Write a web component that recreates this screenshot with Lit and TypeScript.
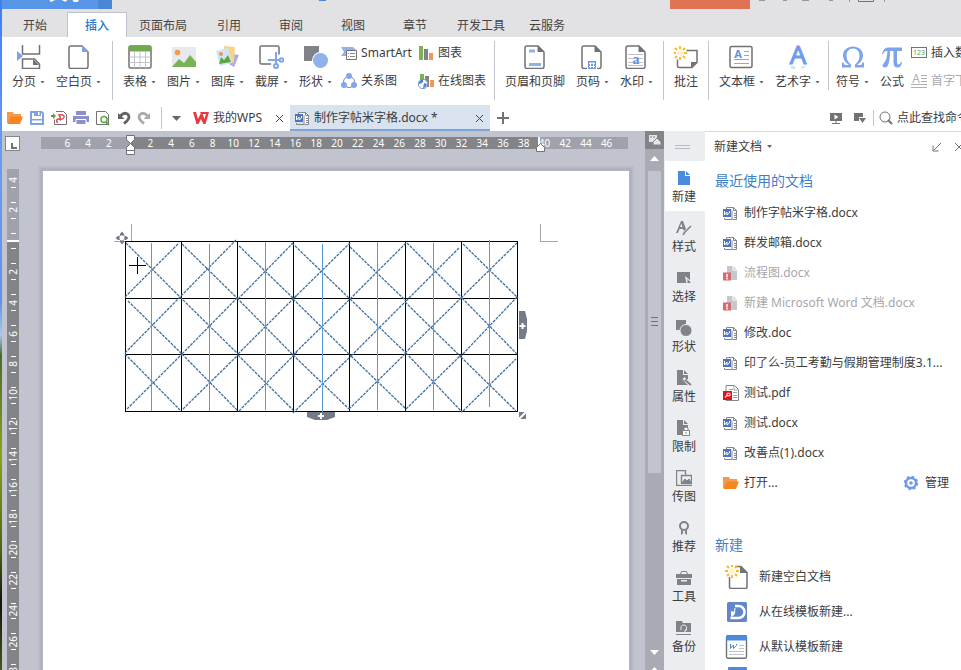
import { LitElement, html, svg, css, nothing, SVGTemplateResult } from "lit";
import { customElement, property } from "lit/decorators.js";
import { classMap } from "lit/directives/class-map.js";

const G = "#717275";
const BLUE = "#8db1ee";

type Icon = [number, number, SVGTemplateResult];

const sun = svg`<circle cx="6" cy="8" r="3" fill="#fdf3d0"/><g stroke="#fbb829" stroke-width="2"><path d="M6 1v3M6 12v3M-1 8h3M10 8h3M1 3l2 2M9 11l2 2M11 3l-2 2M3 11l-2 2"/></g>`;

const sheet = (inner: SVGTemplateResult) => svg`
  <path d="M4 1h11l6 6v14.500a2 2 0 0 1-2 2h-15a2 2 0 0 1-2-2v-18.500a2 2 0 0 1 2-2z" fill="#fff" stroke="${G}" stroke-width="1.500"/>
  <path d="M14.500.5v6.500h6.500z" fill="${G}"/>${inner}`;

const wordDoc = svg`
  <path d="M3.500 3v-1.500h7l3 3v9h-4" fill="#fff" stroke="#85868a"/>
  <path d="M1.500 12v1.500h7.500v-9" stroke="#85868a" fill="none"/>
  <path d="M10.500 1v3.500h3.500M11 7.500h2M11 9.500h2M11 11.500h2" stroke="#85868a" fill="none"/>
  <path d="M0 3h8v8h-8z" fill="#4e73b8"/><path d="M1.500 5v4l2.500-3 0 3 2.500-2v-2" stroke="#fff" fill="none"/>`;

const ICONS: Record<string, Icon> = {
  break: [24, 24, svg`<g fill="none" stroke="${G}" stroke-width="1.500"><path d="M5.500 0v9h17v-9M5.500 24v-10h12l5 5v4.500h-17"/></g><path d="M16 14v6h6z" fill="${G}"/><path d="M0 6l6 5-6 5z" fill="#7aa2ec"/>`],
  blank: [24, 24, svg`<path d="M4 1h11l6 6v14.500a2 2 0 0 1-2 2h-15a2 2 0 0 1-2-2v-18.500a2 2 0 0 1 2-2z" fill="#fff" stroke="${G}" stroke-width="1.500"/><path d="M15 .5v6.500h6.500z" fill="#7aa2ec"/>`],
  table: [24, 24, svg`<rect x="1" y="1" width="22" height="22" rx="1.500" fill="#fff" stroke="${G}" stroke-width="1.500"/><path d="M1 1h22v5.500h-22z" fill="#72a84f"/><path d="M6.500 7v16M12 7v16M17.500 7v16M1.500 12h21M1.500 17.500h21" stroke="#c3c4cc"/>`],
  picture: [26, 24, svg`<path d="M1 2h24v20h-24z" fill="#e7e9ef"/><circle cx="6.500" cy="7.500" r="2.800" fill="#f29a52"/><path d="M1 22l7-8 5 4 6-8 6 7v5z" fill="#79b357"/>`],
  gallery: [24, 24, svg`<path d="M17 9l6 1-5 12-5-3z" fill="#a9abea"/><path d="M8 1l11 1-1 16-10-3z" fill="#f8d487"/><path d="M0 6l12-3 4 15-12 3z" fill="#cfe6f8"/><circle cx="5" cy="9" r="2" fill="#ef9350"/><path d="M3 19l2-7 3 3 4-5 3 7z" fill="#5fa83e"/>`],
  shot: [25, 24, svg`<path d="M12 19h-9.500q-1.500 0-1.500-1.500v-15q0-1.500 1.500-1.500h16q1.500 0 1.500 1.500v7" fill="none" stroke="${G}" stroke-width="1.500"/><g stroke="#7fa6ea" stroke-width="2" fill="none"><path d="M17 7v12M9 15h12"/><circle cx="17" cy="21" r="2"/><circle cx="22.500" cy="15" r="1.800"/></g>`],
  shapes: [26, 24, svg`<path d="M1 1h15v15h-15z" fill="#818287"/><circle cx="17.500" cy="15.500" r="8.500" fill="#fff"/><circle cx="17.500" cy="15.500" r="7.500" fill="#8fb1ec"/>`],
  smart: [16, 16, svg`<path d="M0 2h12l3 3h-10v6h-5l3-4z" fill="#8fb1ec"/><path d="M5.500 5.500h10v9h-10z" fill="#fff" stroke="${G}"/><path d="M7 8.500h1M7 11.500h1M9 8.500h5M9 11.500h5" stroke="#85868a"/>`],
  relation: [16, 16, svg`<circle cx="8" cy="9" r="5.500" fill="none" stroke="#85868a"/><g fill="#7fa6ef"><circle cx="8" cy="3" r="3"/><circle cx="3" cy="12" r="3"/><circle cx="13" cy="12" r="3"/></g>`],
  chart: [16, 16, svg`<path d="M1 1h4v14h-4z" fill="#7db356"/><path d="M6 4h4v11h-4z" fill="#818287"/><path d="M11 8h4v7h-4z" fill="#f2975a"/>`],
  online: [16, 16, svg`<path d="M2 1h4v8h-4z" fill="#7db356"/><path d="M7 3h4v11h-4z" fill="#818287"/><path d="M12 7h4v7h-4z" fill="#f2975a"/><circle cx="5" cy="11" r="4.700" fill="#fff" stroke="#6c93cf"/><path d="M1 9q3-4 4-2t-1 3l-3 1zM6 10l3 1q-1 4-4 4z" fill="#4f83d0"/>`],
  header: [24, 24, sheet(svg`<path d="M6 4.500h6v3h-6zM6 18h12v3h-12z" fill="${BLUE}"/>`)],
  pageno: [24, 24, sheet(svg`<path d="M7 15h10v9h-10z" fill="#fff"/><path d="M8 16h8v8h-8z" fill="#6f9bea"/><path d="M10.500 17v6M13.500 17v6M9 18.500h6M9 21.500h6" stroke="#fff"/>`)],
  watermark: [24, 24, sheet(svg`<path d="M4 9.500h15M4 13.500h15M4 17.500h15M4 20.500h15" stroke="#bfc0c8"/><text x="12" y="19" text-anchor="middle" class="t-a">a</text>`)],
  comment: [24, 24, svg`<path d="M4 5.500h19v12l-5 5h-13q-1.500 0-1.500-1.500v-7" fill="#fff" stroke="${G}" stroke-width="1.500"/><path d="M17 23v-6h6z" fill="${G}"/><circle cx="6" cy="8" r="7" fill="#fff"/>${sun}`],
  textbox: [24, 24, svg`<rect x="1" y="1.500" width="22" height="21" rx="1.500" fill="#fff" stroke="${G}" stroke-width="1.500"/><path d="M15 6.500h5M15 10.500h5M5 14.500h15M5 18.500h15" stroke="#a5a6ac"/><text x="9" y="13" text-anchor="middle" class="t-b">A</text>`],
  wordart: [24, 24, svg`<text x="12" y="19" text-anchor="middle" class="t-c">A</text><path d="M4 21h4l2 3h-4zM14 23l3-2h3l-3 3z" fill="#d3e1f7"/>`],
  symbol: [24, 24, svg`<path d="M1 22.500v-5h1.500q.5 2.500 2 2.500h3.500q-6-4-6-9.500c0-5.500 4.500-9 10-9s10 3.500 10 9q0 5.500-6 9.500h3.500q1.500 0 2-2.500h1.500v5h-9v-3c3-2 4.500-5 4.500-9s-2.500-7-6.500-7-6.500 3-6.500 7 1.500 7 4.500 9v3z" fill="#7ba3ee"/>`],
  formula: [22, 24, svg`<path d="M1 9q1.500-6.500 6-6.500h14v3.500h-5v11q0 2.500 1.500 2.500t2.500-2.500h1q-.5 5.500-4.500 5.500-4 0-4-5v-11.500h-3.500q0 8-1.500 12.500-1 4-3.500 4-2.500 0-2.500-2 0-1 1.500-2.500 3-3 3.500-12-3.500-.5-4.500 3z" fill="#7ba3ee"/>`],
  number: [16, 16, svg`<rect x=".5" y="2.500" width="15" height="10" fill="#fff" stroke="${G}"/><text x="8" y="10" text-anchor="middle" class="t-d">123</text>`],
  dropcap: [16, 16, svg`<path d="M10 2.500h6M10 5.500h6M10 8.500h6M0 11.500h16M0 14.500h16" stroke="#aeb0b8"/><text x="5" y="10" text-anchor="middle" class="t-e">A</text>`],
  folder: [16, 16, svg`<path d="M0 13v-11h6l1 2h7v3h-9l-3 6z" fill="#f49a50"/><path d="M4 6.500h12l-3 7.500h-12.500z" fill="#f6861f"/>`],
  save: [16, 16, svg`<path d="M2 2h10.500l1.500 1.500v10.500h-12z" fill="#fff" stroke="#7ea3e4" stroke-width="2"/><path d="M5 1h7v5h-7zM3 9h10v1.500h-10z" fill="#7ea3e4"/><path d="M9 2h1.500v3h-1.500z" fill="#fff"/>`],
  pdfout: [16, 16, svg`<path d="M5 1.500h7.500l3 3v10h-12v-5" fill="#fff" stroke="${G}"/><path d="M0 5h2v-2l3 3-3 3v-2h-2z" fill="#5da23c"/><path d="M7 12.500a2 1.800 0 1 1 2.500-2c0-2 .5-3-1.500-5.500q6-1 5 2.500-1 2-4 2" fill="none" stroke="#d9444d" stroke-width="1.400"/>`],
  print: [16, 16, svg`<path d="M3 1h10v4h-10zM0 6h16v6h-16z" fill="#8d90c8"/><path d="M3 9.500h10v5h-10z" fill="#8d90c8" stroke="#fff"/><path d="M3 5.500h10" stroke="#fff"/>`],
  preview: [16, 16, svg`<path d="M13.500 14.500h-12v-13h9l3 3z" fill="#fff" stroke="${G}"/><circle cx="9" cy="9.500" r="3" fill="#fff" stroke="#62a544" stroke-width="1.500"/><path d="M11 12l3 3" stroke="#62a544" stroke-width="2"/>`],
  undo: [14, 16, svg`<path d="M1 3v6h6.500z" fill="#606165"/><path d="M3.500 6q4-4.500 7.500-1.500 3 4-4 9" fill="none" stroke="#606165" stroke-width="2.800"/>`],
  redo: [14, 16, svg`<path d="M13 3v6h-6.500z" fill="#a9abb1"/><path d="M10.500 6q-4-4.500-7.500-1.500-3 4 4 9" fill="none" stroke="#a9abb1" stroke-width="2.800"/>`],
  more: [9, 5, svg`<path d="M0 0h9l-4.500 5z" fill="#66676b"/>`],
  wps: [16, 16, svg`<path d="M0 2h3l2 7 2.500-5h2l2 5 1.500-5h-5l-1-2h9l-3.500 12h-2l-2.500-5-2.500 5h-2z" fill="#e8393f"/>`],
  word: [15, 15, wordDoc],
  broken: [15, 15, svg`<path d="M4 0h6l4 4v10h-10z" fill="#c6c8cf"/><path d="M10 0v4h4" stroke="#fff" fill="none"/><path d="M0 6.500h8v8h-8z" fill="#d8696c"/><path d="M4 8v3.500M4 12v1.500" stroke="#fff" stroke-width="1.500"/>`],
  pdf: [16, 16, svg`<path d="M3 .5h8.500l4 4v11h-12.500z" fill="#fff" stroke="#85868a"/><path d="M11 0v5h4M6 4.500h4M10 7.500h4M10 10.500h4M10 12.500h4" stroke="#a0a1a6" fill="none"/><path d="M0 6h9v9h-9z" fill="#e0131a"/><path d="M2.500 12.800a1 1 0 1 1 1.500-1.500v-3h3v2.500h-3" fill="none" stroke="#fff"/>`],
  gear: [16, 16, svg`<circle cx="8" cy="8" r="5" fill="none" stroke="#6f9be6" stroke-width="2.500"/><circle cx="8" cy="8" r="6.500" fill="none" stroke="#6f9be6" stroke-width="1.500" stroke-dasharray="2.550"/><circle cx="8" cy="8" r="1.800" fill="#6f9be6"/>`],
  play: [14, 14, svg`<path d="M1 2h12v8h-12z" fill="${G}"/><path d="M5.500 3.500l4 2.500-4 2.500z" fill="#fff"/><path d="M7 10v2M3 12.500h8" stroke="${G}"/>`],
  cast: [14, 14, svg`<path d="M1 2h9v4h-4v4h-5z" fill="${G}"/><path d="M6 7h7l-3.500 5z" fill="${G}"/>`],
  search: [14, 14, svg`<circle cx="6" cy="6" r="5" fill="none" stroke="${G}"/><path d="M9 9l4 4" stroke="${G}" stroke-width="2"/>`],
  new: [16, 16, svg`<path d="M2 1h7v5h5v9h-12zM10 1l4 4h-4z" fill="#4a8be0"/>`],
  style: [16, 16, svg`<path d="M0 13l5-12h2l3 8-2 2-1-2h-3.500l-1.500 4zM4 7h2.500l-1.200-3.500z" fill="#818287"/><path d="M15 6l-7 7M7 15l2-3" stroke="#818287" stroke-width="1.500"/>`],
  select: [16, 16, svg`<path d="M1 2h13v11h-13z" fill="#818287"/><path d="M9 6l6 5-3 .5-1.500 2.500z" fill="#ebedf1"/><path d="M11 9l4 3.500-3 .5z" fill="#818287"/>`],
  figure: [16, 16, svg`<path d="M0 0h10v10h-10z" fill="#818287"/><circle cx="10" cy="10.500" r="6" fill="#818287" stroke="#ebedf1"/>`],
  props: [16, 16, svg`<path d="M1 0h6v5h5v10h-11zM8 0l4 4h-4z" fill="#818287"/><path d="M7 8l8 7" stroke="#ebedf1" stroke-width="4"/><path d="M9 10l6 5" stroke="#818287" stroke-width="2"/><circle cx="8.500" cy="9" r="2" fill="none" stroke="#818287"/>`],
  limit: [16, 16, svg`<path d="M1 0h6v5h5v10h-11zM8 0l4 4h-4z" fill="#818287"/><path d="M6.500 10.500h7v5h-7zM8 10v-2q2-2 4 0v2" fill="#fff" stroke="#818287"/><path d="M10 12v2" stroke="#818287"/>`],
  upload: [16, 16, svg`<path d="M4 15.500h-3.500v-15h9v4M5.500 5.500h10v8h-10z" fill="none" stroke="#818287" stroke-width="1.400"/><path d="M6 13l3-4 2 2 2-2 2 4zM4 15.500h12" fill="#818287" stroke="#818287"/>`],
  recommend: [16, 16, svg`<circle cx="8" cy="6" r="4" fill="none" stroke="#818287" stroke-width="2"/><path d="M5 10v5l2-1.500v-3M11 10v5l-2-1.500v-3" fill="#818287"/>`],
  tools: [16, 16, svg`<path d="M0 4h16v4h-16zM1 9h14v6h-14z" fill="#818287"/><path d="M4.500 4l1-2.500h5l1 2.500" fill="none" stroke="#818287"/><path d="M5 10h6v1.500h-6z" fill="#ebedf1"/>`],
  backup: [16, 16, svg`<path d="M0 1h6l1 2h8v9h-15zM0 14h15v1h-15z" fill="#818287"/><path d="M5 10q-1-5 3-5 4 1 2 5M8 11l2 0 0-2" fill="none" stroke="#ebedf1"/>`],
  newdoc: [24, 24, svg`<path d="M4.500 12v10q0 1.500 1.500 1.500h14.500q1.500 0 1.500-1.500v-14.500l-6-6h-6" fill="#fff" stroke="${G}" stroke-width="1.500"/><path d="M15 1v7h7z" fill="${G}"/><g transform="translate(1 -2)">${sun}</g>`],
  docer: [24, 24, svg`<rect x="2" y="2" width="20" height="20" rx="1.500" fill="#6287c9"/><path d="M10 6h3.500a5.500 5.500 0 0 1 0 12h-8" fill="none" stroke="#fff" stroke-width="2.500"/><path d="M6 11v5q4 0 4-4z" fill="#fff"/><path d="M10 8q1 5-4 10" stroke="#fff" fill="none"/>`],
  template: [24, 24, svg`<rect x="1.500" y=".7" width="20" height="22.500" rx="1.500" fill="#fff" stroke="${G}" stroke-width="1.400"/><path d="M1 .5h21v5h-21z" fill="#4a8be0"/><path d="M5.500 9v4.500l3-3.500 0 3.500 3-3v-1.500" fill="none" stroke="#4a8be0"/><path d="M14 10.500h5M14 13.500h5M4 16.500h15M4 19.500h15" stroke="#c0c2c9"/>`],
};

const icon = (name: string) => {
  const [w, h, body] = ICONS[name];
  return html`<svg class="ico" width=${w} height=${h} viewBox="0 0 ${w} ${h}" fill="none" aria-hidden="true">${body}</svg>`;
};

const shared = css`
  * { box-sizing: border-box; }
  button { font: inherit; color: inherit; background: none; border: 0; padding: 0; margin: 0; white-space: nowrap; }
  a { color: inherit; text-decoration: none; white-space: nowrap; }
  svg { display: block; flex: none; }
  .caret { flex: none; width: 5px; height: 3px; background: #66676b; clip-path: polygon(0 0, 100% 0, 50% 100%); }
  .t-a { font: bold 14px "Liberation Serif", serif; fill: #5f8fe6; }
  .t-b { font: bold 11px "Noto Sans", sans-serif; fill: #5f8fe6; }
  .t-c { font: 26px "Noto Sans", sans-serif; fill: #6f9bea; stroke: #6f9bea; }
  .t-d { font: 7px "Noto Sans", sans-serif; fill: #5da23c; }
  .t-e { font: 12px "Noto Sans", sans-serif; fill: #aeb0b8; }
`;

@customElement("ribbon-bar")
class RibbonBar extends LitElement {
  static styles = [shared, css`
    :host { display: flex; height: 68px; padding: 4px 0 2px 10px; background: #fff; overflow: hidden; }
    .group { display: flex; gap: 11px; flex: none; height: 60px; }
    .sep { flex: none; width: 1px; height: 59px; background: #c3c5cd; margin: 0 10px 0 11px; }
    .sep.tight { margin: 0 10px; }
    .sep.short { height: 49px; margin: 0 7px 0 8px; }
    .sep.near { margin-left: 8px; }
    .big { display: flex; flex-direction: column; align-items: center; gap: 4px; padding-top: 4px; }
    .label { display: flex; align-items: center; gap: 4px; height: 18px; line-height: 18px; }
    .stack { display: flex; flex-direction: column; gap: 10px; padding-top: 3px; flex: none; }
    .small { display: flex; align-items: center; gap: 4px; height: 18px; line-height: 18px; }
    .first { margin-left: 9px; }
    .next { margin-left: 6px; }
    .last { margin-left: 7px; }
    .off { color: #a7a9b0; }
  `];
  private big(name: string, label: string, menu = true) {
    return html`<button class="big">${icon(name)}<span class="label">${label}${menu ? html`<i class="caret"></i>` : nothing}</span></button>`;
  }
  private small(name: string, label: string, off = false) {
    return html`<button class=${classMap({ small: true, off })}>${icon(name)}<span>${label}</span></button>`;
  }
  render() {
    return html`
      <div class="group">${this.big("break", "分页")}${this.big("blank", "空白页")}</div>
      <i class="sep"></i>
      <div class="group">
        ${this.big("table", "表格")}${this.big("picture", "图片")}${this.big("gallery", "图库")}${this.big("shot", "截屏")}${this.big("shapes", "形状")}
      </div>
      <div class="stack first">${this.small("smart", "SmartArt")}${this.small("relation", "关系图")}</div>
      <div class="stack next">${this.small("chart", "图表")}${this.small("online", "在线图表")}</div>
      <i class="sep near"></i>
      <div class="group">${this.big("header", "页眉和页脚", false)}${this.big("pageno", "页码")}${this.big("watermark", "水印")}</div>
      <i class="sep tight"></i>
      <div class="group">${this.big("comment", "批注", false)}</div>
      <i class="sep tight"></i>
      <div class="group">${this.big("textbox", "文本框")}${this.big("wordart", "艺术字")}</div>
      <i class="sep short"></i>
      <div class="group">${this.big("symbol", "符号")}${this.big("formula", "公式", false)}</div>
      <div class="stack last">${this.small("number", "插入数字")}${this.small("dropcap", "首字下沉", true)}</div>
    `;
  }
}

@customElement("document-bar")
class DocumentBar extends LitElement {
  static styles = [shared, css`
    :host { display: flex; align-items: stretch; height: 26px; background: #fff; padding-left: 5px; overflow: hidden; }
    .quick, .tools { display: flex; align-items: center; flex: none; }
    .quick { gap: 6px; }
    .line { width: 1px; height: 22px; background: #c3c5cd; }
    .quick .line { margin: 0 4px; }
    .tab { display: flex; align-items: center; flex: none; gap: 4px; border-bottom: 2px solid transparent; padding: 2px 6px 0 5px; }
    .home { margin-left: 7px; width: 102px; }
    .active { width: 200px; background: #d8e3ef; border-color: #7ba6dc; }
    .tab a { flex: 1; line-height: 18px; }
    .add { margin-left: 7px; display: flex; align-items: center; }
    .tools { margin-left: auto; gap: 10px; }
    .find { display: flex; align-items: center; gap: 4px; width: 82px; overflow: hidden; }
    .tools .line { height: 16px; margin: 0 -5px 0 -4px; }
  `];
  private quick: [string, string][] = [["folder", "打开"], ["save", "保存"], ["pdfout", "输出为PDF"], ["print", "打印"], ["preview", "打印预览"], ["undo", "撤销"], ["redo", "恢复"]];
  private close() {
    return html`<button aria-label="关闭"><svg width="9" height="9" viewBox="0 0 9 9"><path d="M1 1l7 7M8 1l-7 7" stroke="#444"/></svg></button>`;
  }
  render() {
    return html`
      <div class="quick">
        ${this.quick.map(([n, t]) => html`<button aria-label=${t}>${icon(n)}</button>`)}
        <i class="line"></i><button aria-label="更多">${icon("more")}</button>
      </div>
      <div class="tab home">${icon("wps")}<a href="#home">我的WPS</a>${this.close()}</div>
      <div class="tab active">${icon("word")}<a href="#doc">制作字帖米字格.docx *</a>${this.close()}</div>
      <button class="add" aria-label="新标签"><svg width="12" height="12" viewBox="0 0 12 12"><path d="M6 0v12M0 6h12" stroke="#717275" stroke-width="2"/></svg></button>
      <div class="tools">
        <button aria-label="播放">${icon("play")}</button><button aria-label="窗口">${icon("cast")}</button><i class="line"></i>
        <button class="find">${icon("search")}<span>点此查找命令</span></button>
      </div>
    `;
  }
}

type Seg = [number, number, number, number];
/* Diagonal strokes of every practice cell, row by row, in canvas coordinates. */
const DIAGONALS: Seg[] = [
  [126, 243, 181, 298], [125, 297, 179, 243], [182, 244, 238, 299], [181, 296, 236, 240],
  [239, 246, 294, 299], [238, 299, 293, 243], [292, 243, 350, 299], [294, 298, 350, 243],
  [350, 247, 406, 301], [350, 299, 406, 243], [407, 243, 462, 298], [406, 301, 459, 248],
  [463, 244, 518, 298], [461, 298, 517, 243],
  [128, 301, 182, 354], [125, 353, 180, 297], [180, 297, 238, 354], [182, 354, 237, 298],
  [237, 298, 294, 356], [238, 354, 297, 295], [293, 299, 351, 356], [293, 355, 350, 299],
  [350, 299, 406, 353], [351, 356, 405, 302], [405, 302, 461, 357], [405, 353, 461, 298],
  [462, 298, 517, 354], [460, 357, 517, 297],
  [125, 354, 180, 410], [127, 409, 182, 354], [182, 354, 238, 411], [183, 409, 238, 355],
  [238, 355, 293, 410], [239, 411, 297, 352], [293, 355, 349, 409], [293, 413, 351, 356],
  [351, 356, 406, 409], [349, 409, 406, 353], [406, 353, 462, 412], [406, 409, 461, 355],
  [461, 357, 516, 411], [463, 411, 516, 359],
];
const UPRIGHTS: [number, number, number][] = [
  [151, 243, 411], [209, 244, 411], [265, 242, 410], [322, 244, 412], [377, 242, 410], [433, 243, 410], [489, 240, 407],
];

@customElement("writer-canvas")
class WriterCanvas extends LitElement {
  static styles = [shared, css`
    :host { display: grid; grid-template: 20px 1fr / 35px 1fr; background: #c1c4ce; overflow: hidden; min-width: 0; min-height: 0; }
    .corner { display: flex; width: 15px; height: 15px; margin: 5px 0 0 3px; border: 1px solid #85868a; background: #fff; padding: 6px 0 0 5px; }
    .h-ruler { display: flex; width: 587px; height: 12px; margin: 6px 0 0 4px; position: relative; font-size: 10px; color: #fff;
      background: linear-gradient(90deg, #9fa2ab 89px, #838488 89px 499px, #9fa2ab 499px); }
    .ticks { display: grid; grid-template-columns: repeat(27, 1fr); width: 560px; margin-left: 16px; text-align: center; line-height: 12px; }
    .mark { position: absolute; top: -3px; }
    .indent { left: 84px; }
    .margin { left: 494px; }
    .v-ruler { width: 12px; margin: 18px 0 0 5px; overflow: hidden; font-size: 10px; color: #fff; min-height: 0;
      background: linear-gradient(#9fa2ab 71px, #fff 71px 73px, #838488 73px); }
    .rows { display: grid; grid-template-rows: repeat(17, 1fr); height: 524px; margin-top: -5px; }
    .cell { display: flex; flex-direction: column; align-items: center; justify-content: space-between; padding: 7px 0; }
    .cell i { width: 5px; height: 1px; background: #fff; }
    .cell b { font-weight: normal; writing-mode: vertical-rl; transform: rotate(180deg); line-height: 12px; }
    .cell:first-child i:first-child { visibility: hidden; }
    .desk { padding: 20px 0 0 6px; min-width: 0; min-height: 0; overflow: hidden; }
    .page { position: relative; width: 586px; height: 100%; background: #fff; padding: 70px 0 0 82px; box-shadow: 0 0 0 3px #b0b2bf, 0 0 0 5px #b9bbc7; }
    table { border-collapse: collapse; table-layout: fixed; width: 393px; height: 171px; }
    td { border: 1px solid #000; padding: 0; }
    .overlay { position: absolute; top: 0; left: 0; }
    .thin { shape-rendering: crispEdges; }
  `];
  private numbers = [6, 4, 2, 0, ...Array.from({ length: 23 }, (_, i) => 2 * i + 2)];
  private rows = [4, 2, 0, ...Array.from({ length: 14 }, (_, i) => 2 * i + 2)];
  render() {
    return html`
      <button class="corner" aria-label="制表位"><svg width="6" height="6" viewBox="0 0 6 6"><path d="M1 0v5h5" fill="none" stroke="#717275" stroke-width="2"/></svg></button>
      <div class="h-ruler">
        <div class="ticks">${this.numbers.map((n) => html`<span>${n || ""}</span>`)}</div>
        <svg class="mark indent" width="11" height="22" viewBox="0 0 11 22"><path d="M1.500 1.500h8v4l-4 4 4 4v7h-8v-7l4-4-4-4zM1.500 16.500h8" fill="#fff" stroke="#717275"/></svg>
        <svg class="mark margin" width="11" height="19" viewBox="0 0 11 19"><path d="M3 3h2v8h-2z" fill="#fff"/><path d="M1.500 17.500v-4l4-4 4 4v4z" fill="#fff" stroke="#717275"/></svg>
      </div>
      <div class="v-ruler"><div class="rows">${this.rows.map((n) => html`<div class="cell"><i></i>${n ? html`<b>${n}</b>` : nothing}<i></i></div>`)}</div></div>
      <div class="desk"><div class="page">
        <table aria-label="米字格">
          ${[0, 1, 2].map(() => html`<tr>${[0, 1, 2, 3, 4, 5, 6].map(() => html`<td></td>`)}</tr>`)}
        </table>
        <svg class="overlay" width="586" height="300" viewBox="43 171 586 300" fill="none">
          <g stroke="#3f6f9f" stroke-width="1.300" stroke-dasharray="3 1">${DIAGONALS.map(([a, b, c, d]) => svg`<path d="M${a} ${b}L${c} ${d}"/>`)}</g>
          <g class="thin" fill="#5b9bd5">${UPRIGHTS.map(([x, a, b]) => svg`<rect x=${x} y=${a} width="1" height=${b - a}/>`)}</g>
          <path class="thin" d="M131.500 224v17M114 241.500h11M540.500 224v17.500h17.500" stroke="#a3a5ad"/>
          <path class="thin" d="M137.500 257v17M129 265.500h17" stroke="#000"/>
          <path d="M122 233l4 4-4 5-4-4z" stroke="#a9adb6"/>
          <path d="M120 234l2-2.500 2 2.500v1.500h-4zM120 242l2 2.500 2-2.500v-1.500h-4zM118 236l-2.500 2 2.500 2h1.500v-4zM126 236l2.500 2-2.500 2h-1.500v-4z" fill="#717884"/>
          <path d="M519 311h6l2 8v12l-2 8h-6zM307 412h28v5l-8 3h-12l-8-3zM519 412h7v7h-7z" fill="#757c88"/>
          <path d="M519 419l7-7" stroke="#fff" stroke-width="2"/>
          <path d="M522.500 323v6M519.500 326h6M321 413v6M318 416h6" stroke="#fff" stroke-width="2"/>
        </svg>
      </div></div>
    `;
  }
}

@customElement("side-nav")
class SideNav extends LitElement {
  static styles = [shared, css`
    :host { display: flex; flex-direction: column; background: #ebedf1; overflow: hidden; }
    .grip { flex: none; height: 30px; padding-top: 14px; display: flex; flex-direction: column; align-items: center; gap: 2px; margin-right: 4px; }
    .grip i { width: 15px; height: 1px; background: #b9bbc2; }
    .item { flex: none; height: 50px; display: flex; flex-direction: column; align-items: center; gap: 1px; padding: 9px 2px 0 0; margin-left: 1px; }
    .item span { line-height: 20px; }
    .on { background: #fff; }
  `];
  @property({ attribute: false }) items: [string, string][] = [];
  render() {
    return html`<div class="grip"><i></i><i></i></div>
      ${this.items.map(([n, t], i) => html`<button class=${classMap({ item: true, on: i === 0 })}>${icon(n)}<span>${t}</span></button>`)}`;
  }
}

@customElement("task-panel")
class TaskPanel extends LitElement {
  static styles = [shared, css`
    :host { display: block; background: #fff; overflow: hidden; padding-left: 9px; border-top: 1px solid #d5d9e0; }
    header { display: flex; align-items: center; height: 29px; gap: 10px; }
    .title { display: flex; align-items: center; gap: 5px; margin-right: auto; }
    header .last { margin: 0 -3px 0 2px; }
    h2 { margin: 0; font-size: 14px; font-weight: normal; line-height: 20px; color: #3f7fc4; padding: 10px 0 7px 1px; }
    ul { list-style: none; margin: 0; padding: 0; }
    .recent { display: flex; align-items: center; gap: 6px; height: 30px; padding-left: 9px; }
    .box { width: 15px; flex: none; }
    .off { color: #a7a7ab; }
    .manage { display: flex; align-items: center; gap: 6px; margin: 0 12px 0 auto; }
    .second { padding-top: 37px; padding-bottom: 4px; }
    .make { display: flex; align-items: center; gap: 10px; height: 35px; padding-left: 11px; }
    .peek { width: 19px; height: 10px; margin: 3px 0 0 14px; background: #4a8be0; border-radius: 1px; }
  `];
  private files: [string, string][] = [
    ["word", "制作字帖米字格.docx"], ["word", "群发邮箱.docx"], ["broken", "流程图.docx"], ["broken", "新建 Microsoft Word 文档.docx"],
    ["word", "修改.doc"], ["word", "印了么-员工考勤与假期管理制度3.1..."], ["pdf", "测试.pdf"], ["word", "测试.docx"], ["word", "改善点(1).docx"],
  ];
  render() {
    return html`
      <header>
        <button class="title">新建文档<i class="caret"></i></button>
        <button aria-label="收起"><svg width="10" height="10" viewBox="0 0 10 10"><path d="M9 1l-7 7M1 3.500v5.500h5.500" stroke="#717275" fill="none"/></svg></button>
        <button class="last" aria-label="关闭"><svg width="10" height="10" viewBox="0 0 10 10"><path d="M1 1l8 8M9 1l-8 8" stroke="#717275"/></svg></button>
      </header>
      <h2>最近使用的文档</h2>
      <ul>
        ${this.files.map(([n, t]) => html`<li class=${classMap({ recent: true, off: n === "broken" })}><span class="box">${icon(n)}</span><a href="#file">${t}</a></li>`)}
        <li class="recent"><span class="box">${icon("folder")}</span><a href="#open">打开...</a><button class="manage">${icon("gear")}管理</button></li>
      </ul>
      <h2 class="second">新建</h2>
      <ul>
        ${[["newdoc", "新建空白文档"], ["docer", "从在线模板新建..."], ["template", "从默认模板新建"]].map(
          ([n, t]) => html`<li class="make">${icon(n)}<a href="#new">${t}</a></li>`)}
      </ul>
      <div class="peek"></div>
    `;
  }
}

@customElement("app-root")
class AppRoot extends LitElement {
  static styles = [shared, css`
    :host { display: grid; grid-template-columns: 2px minmax(0, 1fr); height: 100vh; overflow: hidden; background: #fff;
      font: 12px/18px "Noto Sans", "Noto Sans CJK SC", sans-serif; color: #3c3c3e; }
    .desktop { background: linear-gradient(#3f7df0, #6b9cf0 24%, #5c93e8 45%, #a9c6ee 50%, #4a6a2c 53%, #86a51c 68%, #4c6414 82%, #10140a 90%, #46581a); }
    .app { display: flex; flex-direction: column; min-width: 0; min-height: 0; }
    .title { display: flex; flex: none; height: 9px; background: #e2e2e4; overflow: hidden; }
    .brand { display: flex; align-items: flex-end; width: 96px; background: #5796e6; color: #fff; font: bold 19px/18px "Noto Sans", "Noto Sans CJK SC", sans-serif; padding: 0 0 3px 6px; white-space: nowrap; }
    .brand span { margin-bottom: 4px; }
    .brand-end { width: 14px; background: #4a86d6; }
    .dot { width: 7px; height: 1px; background: #4a86d6; margin-left: 207px; }
    .login { width: 80px; background: #e07354; margin-left: auto; }
    .sys { width: 211px; }
    nav { display: flex; flex: none; align-items: flex-end; height: 28px; background: #e2e2e4; padding-left: 2px; }
    nav a { min-width: 62px; height: 25px; padding: 0 10px; text-align: center; line-height: 26px; border: 1px solid transparent; border-bottom: 0; color: #444; }
    nav .on { background: #fff; border-color: #bfc1cc; color: #2f78c8; font-weight: 500; margin: 0 1px; min-width: 60px; }
    .work { flex: 1; display: grid; grid-template-columns: minmax(0, 1fr) 19px 41px 256px; min-height: 0; }
    .scroll { display: flex; flex-direction: column; align-items: center; background: #a9aab4; min-height: 0; }
    .view { display: flex; justify-content: center; align-items: center; align-self: stretch; height: 18px; background: #838488; flex: none; }
    .arrow { flex: none; width: 9px; height: 5px; background: #fff; clip-path: polygon(50% 0, 100% 100%, 0 100%); margin: 7px 0 10px; }
    .thumb { flex: none; display: flex; flex-direction: column; justify-content: center; align-items: center; gap: 3px; width: 13px; height: 56%; background: #c1c4ce; margin-bottom: auto; }
    .thumb i { width: 7px; height: 1px; background: #717275; }
    .down { clip-path: polygon(0 0, 100% 0, 50% 100%); margin: 0 0 12px; }
    .up2 { margin: 0 0 -2px; }
  `];
  private tabs = ["开始", "插入", "页面布局", "引用", "审阅", "视图", "章节", "开发工具", "云服务"];
  private side: [string, string][] = [["new", "新建"], ["style", "样式"], ["select", "选择"], ["figure", "形状"], ["props", "属性"], ["limit", "限制"], ["upload", "传图"], ["recommend", "推荐"], ["tools", "工具"], ["backup", "备份"]];
  render() {
    return html`
      <div class="desktop"></div>
      <div class="app">
        <div class="title">
          <div class="brand"><span>WPS文字</span></div><div class="brand-end"></div><i class="dot"></i>
          <div class="login"></div>
          <svg class="sys" width="211" height="3" viewBox="0 0 211 3" fill="none"><path d="M9 .5h6M33 .5h4M52 .5h7M79 .5h4M99.500 0v2M134.500 0v2" stroke="#96979c"/><path d="M108.500 0v1.500h15v-1.500" stroke="#717275"/></svg>
        </div>
        <nav>${this.tabs.map((t, i) => html`<a href="#tab" class=${classMap({ on: i === 1 })}>${t}</a>`)}</nav>
        <ribbon-bar></ribbon-bar>
        <document-bar></document-bar>
        <div class="work">
          <writer-canvas></writer-canvas>
          <div class="scroll">
            <button class="view" aria-label="视图"><svg width="13" height="12" viewBox="0 0 13 12"><path d="M1 1h8v3l-3 4h-5z" fill="#e4e5e9"/><path d="M3 2v2M6 2v2" stroke="#838488"/><path d="M5 8l4-4 4 4v3h-8z" fill="#e4e5e9" stroke="#838488"/></svg></button>
            <i class="arrow"></i>
            <div class="thumb"><i></i><i></i><i></i></div>
            <i class="arrow down"></i><i class="arrow up2"></i>
          </div>
          <side-nav .items=${this.side}></side-nav>
          <task-panel></task-panel>
        </div>
      </div>
    `;
  }
}
